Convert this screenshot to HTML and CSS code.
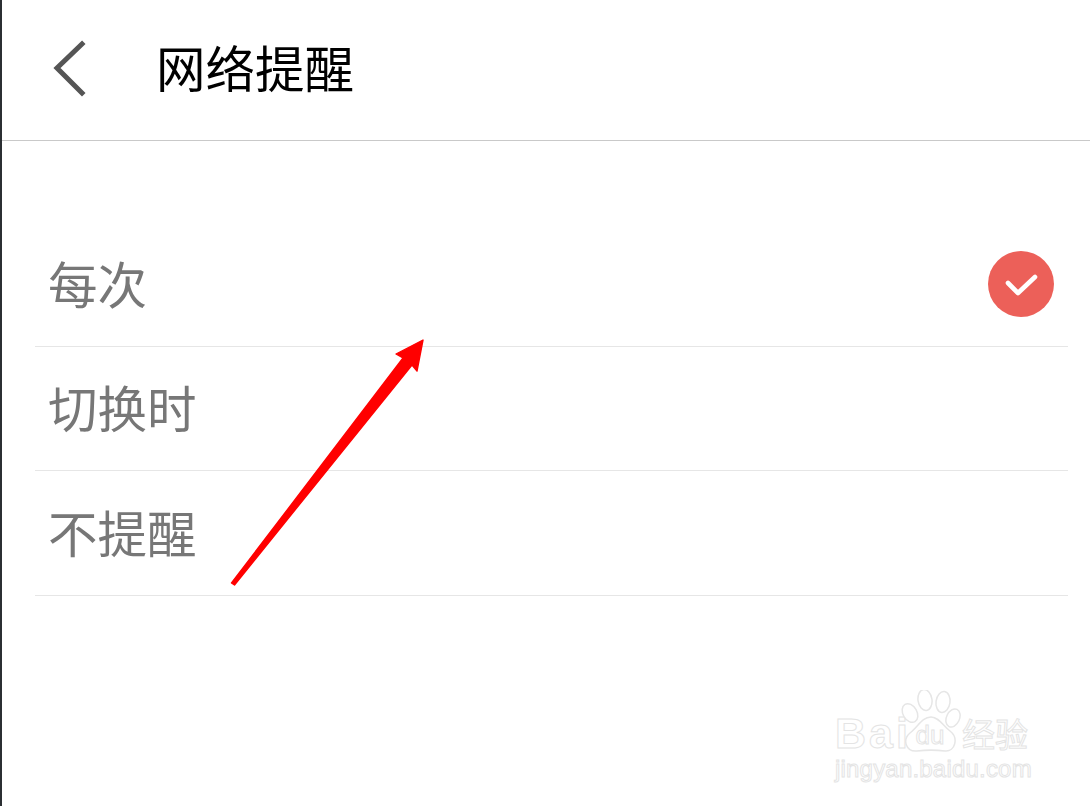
FILE: index.html
```html
<!DOCTYPE html>
<html lang="zh-CN">
<head>
<meta charset="utf-8">
<title>网络提醒</title>
<link rel="stylesheet" href="styles.css">
</head>
<body>
<div class="screen">
  <header class="topbar">
    <svg class="back" viewBox="0 0 40 60" width="40" height="60" aria-hidden="true">
      <path d="M31 5 L6 29 L31 54" fill="none" stroke="#555" stroke-width="5" stroke-linecap="square" stroke-linejoin="miter"/>
    </svg>
    <h1 class="title">网络提醒</h1>
  </header>
  <ul class="options">
    <li class="option"><span class="label">每次</span>
      <svg class="check" viewBox="0 0 66 66" width="66" height="66" aria-hidden="true">
        <circle cx="33" cy="33" r="33" fill="#ec6059"/>
        <path d="M20 32 L30 42 L47 26" fill="none" stroke="#fff" stroke-width="4.6" stroke-linecap="round" stroke-linejoin="round"/>
      </svg>
    </li>
    <li class="option"><span class="label">切换时</span></li>
    <li class="option"><span class="label">不提醒</span></li>
  </ul>
  <svg class="arrow" viewBox="0 0 205 255" width="205" height="255" aria-hidden="true">
    <path d="M198 5 L192 36 L187 30 L9.5 250 L6.5 248 L178 23 L171 19 Z" fill="#ff0000" stroke="#ff0000" stroke-width="1.4" stroke-linejoin="round"/>
  </svg>
  <div class="watermark">
    <div class="wm-top">
      <span class="wm-bai">Bai</span>
      <svg class="wm-paw" viewBox="0 0 60 62" width="60" height="62" aria-hidden="true">
        <g fill="#fff" stroke="#e6e6e6" stroke-width="1.5">
          <ellipse cx="9" cy="23" rx="7" ry="10" transform="rotate(-30 9 23)"/>
          <ellipse cx="24" cy="10" rx="7" ry="10.5" transform="rotate(-8 24 10)"/>
          <ellipse cx="42" cy="12" rx="7" ry="10.5" transform="rotate(8 42 12)"/>
          <ellipse cx="52" cy="28" rx="6.5" ry="9.5" transform="rotate(25 52 28)"/>
          <path d="M30 27 C38 27 42 36 49 41 C58 48 54 62 44 61 C36 60 24 60 16 61 C5 62 1 50 9 43 C17 37 21 27 30 27 Z"/>
        </g>
        <text x="29" y="54" class="wm-du">du</text>
      </svg>
      <span class="wm-cn">经验</span>
    </div>
    <div class="wm-url">jingyan.baidu.com</div>
  </div>
</div>
</body>
</html>
```
FILE: styles.css
```css
* { box-sizing: border-box; }
html, body { margin: 0; padding: 0; background: #fff; }
body { overflow: hidden; }
.screen {
  position: relative;
  width: 1090px;
  height: 806px;
  border-left: 2px solid #2b2f33;
  background: #fff;
  font-family: "Noto Sans CJK SC", "Noto Sans", sans-serif;
  overflow: hidden;
}
.topbar {
  height: 141px;
  display: flex;
  align-items: center;
  border-bottom: 1px solid #c9c9c9;
  padding-left: 49px;
  padding-bottom: 3px;
}
.back { flex: none; margin-right: 65px; }
.title {
  margin: 0 0 4px;
  font-size: 49.5px;
  font-weight: 400;
  line-height: 60px;
  color: #000;
}
.options {
  list-style: none;
  margin: 81.3px 22px 0 33px;
  padding: 0;
}
.option {
  height: 124.5px;
  display: flex;
  align-items: center;
  justify-content: space-between;
  border-bottom: 1px solid #e6e6e6;
  padding: 0 14px 0 13px;
}
.label { font-size: 49.5px; line-height: 60px; color: #777; margin-bottom: 3px; }
.check { flex: none; }
.arrow { position: absolute; left: 223px; top: 335px; }
.watermark {
  position: absolute;
  left: 833px;
  top: 690px;
  width: 200px;
}
.wm-top { display: flex; align-items: flex-end; height: 62px; }
.wm-bai, .wm-cn, .wm-url {
  color: #fff;
  -webkit-text-stroke: 1px #e4e4e4;
}
.wm-bai {
  font-family: "Liberation Sans", sans-serif;
  font-weight: 700;
  font-size: 43px;
  line-height: 48px;
  letter-spacing: 3px;
  width: 66px;
  flex: none;
  margin-bottom: -5px;
}
.wm-paw { flex: none; }
.wm-du {
  font-family: "Liberation Sans", sans-serif;
  font-size: 26px;
  text-anchor: middle;
  fill: #fff;
  stroke: #e4e4e4;
  stroke-width: 1;
}
.wm-cn { font-size: 33px; line-height: 44px; white-space: nowrap; margin-left: 1px; margin-bottom: -3px; }
.wm-url {
  font-family: "Liberation Sans", sans-serif;
  font-size: 24px;
  line-height: 26px;
  letter-spacing: 0.2px;
  margin-top: 4px;
  white-space: nowrap;
}
```
